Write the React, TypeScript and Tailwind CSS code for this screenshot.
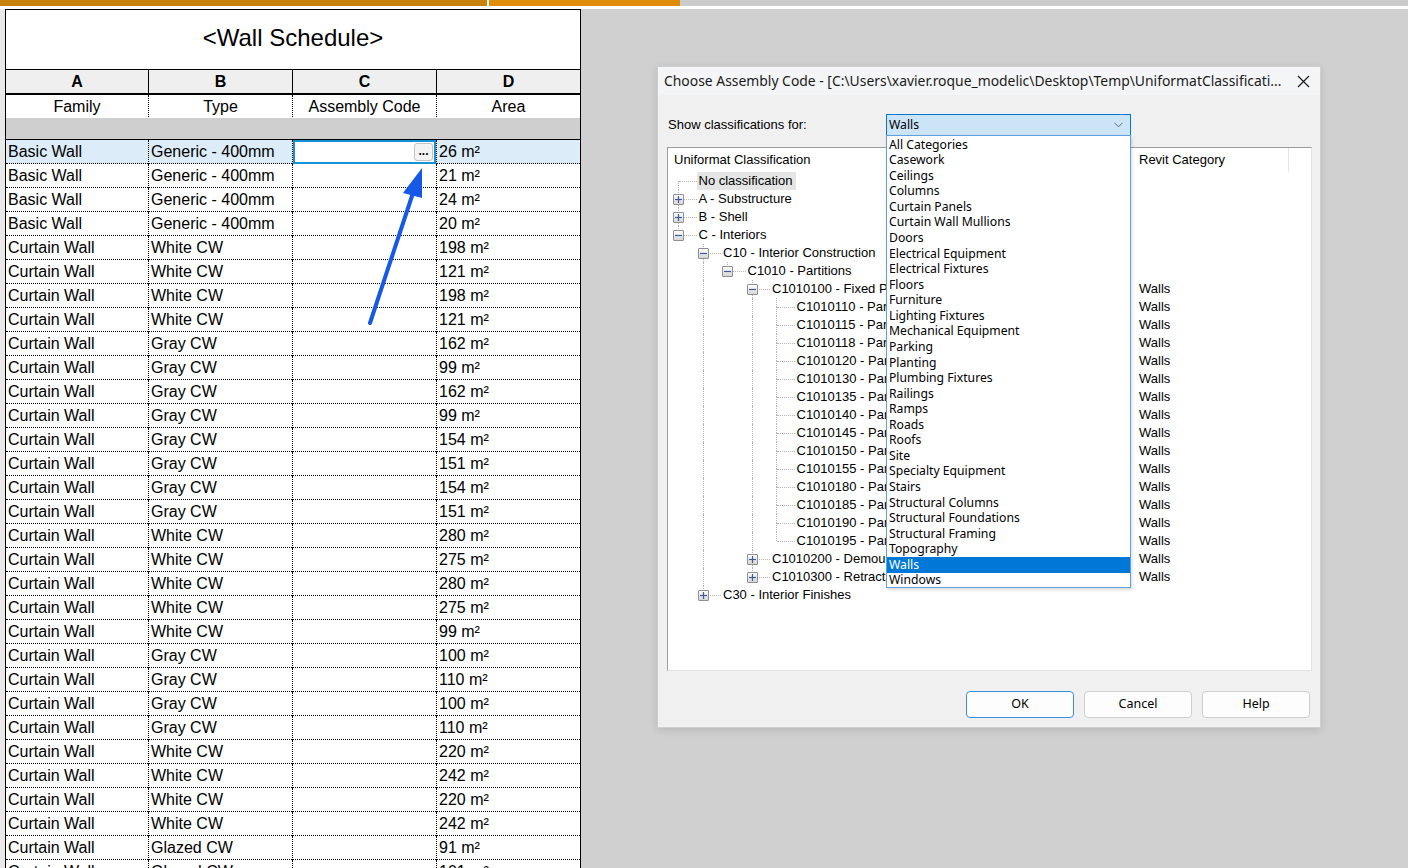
import React from "react";

type Row = [family: string, type: string, area: string];

const schedule: Row[] = [
  ["Basic Wall", "Generic - 400mm", "26"],
  ["Basic Wall", "Generic - 400mm", "21"],
  ["Basic Wall", "Generic - 400mm", "24"],
  ["Basic Wall", "Generic - 400mm", "20"],
  ["Curtain Wall", "White CW", "198"],
  ["Curtain Wall", "White CW", "121"],
  ["Curtain Wall", "White CW", "198"],
  ["Curtain Wall", "White CW", "121"],
  ["Curtain Wall", "Gray CW", "162"],
  ["Curtain Wall", "Gray CW", "99"],
  ["Curtain Wall", "Gray CW", "162"],
  ["Curtain Wall", "Gray CW", "99"],
  ["Curtain Wall", "Gray CW", "154"],
  ["Curtain Wall", "Gray CW", "151"],
  ["Curtain Wall", "Gray CW", "154"],
  ["Curtain Wall", "Gray CW", "151"],
  ["Curtain Wall", "White CW", "280"],
  ["Curtain Wall", "White CW", "275"],
  ["Curtain Wall", "White CW", "280"],
  ["Curtain Wall", "White CW", "275"],
  ["Curtain Wall", "White CW", "99"],
  ["Curtain Wall", "Gray CW", "100"],
  ["Curtain Wall", "Gray CW", "110"],
  ["Curtain Wall", "Gray CW", "100"],
  ["Curtain Wall", "Gray CW", "110"],
  ["Curtain Wall", "White CW", "220"],
  ["Curtain Wall", "White CW", "242"],
  ["Curtain Wall", "White CW", "220"],
  ["Curtain Wall", "White CW", "242"],
  ["Curtain Wall", "Glazed CW", "91"],
  ["Curtain Wall", "Glazed CW", "101"],
];

const categories = [
  "All Categories",
  "Casework",
  "Ceilings",
  "Columns",
  "Curtain Panels",
  "Curtain Wall Mullions",
  "Doors",
  "Electrical Equipment",
  "Electrical Fixtures",
  "Floors",
  "Furniture",
  "Lighting Fixtures",
  "Mechanical Equipment",
  "Parking",
  "Planting",
  "Plumbing Fixtures",
  "Railings",
  "Ramps",
  "Roads",
  "Roofs",
  "Site",
  "Specialty Equipment",
  "Stairs",
  "Structural Columns",
  "Structural Foundations",
  "Structural Framing",
  "Topography",
  "Walls",
  "Windows",
];

type TreeNode = {
  label: string;
  level: number;
  box?: "+" | "-";
  first?: boolean;
  last?: boolean;
  guides: number[];
  walls?: boolean;
  selected?: boolean;
};

const leafCodes = ["110", "115", "118", "120", "130", "135", "140", "145", "150", "155", "180", "185", "190", "195"];

const tree: TreeNode[] = [
  { label: "No classification", level: 0, first: true, guides: [], selected: true },
  { label: "A - Substructure", level: 0, box: "+", guides: [] },
  { label: "B - Shell", level: 0, box: "+", guides: [] },
  { label: "C - Interiors", level: 0, box: "-", last: true, guides: [] },
  { label: "C10 - Interior Construction", level: 1, box: "-", guides: [] },
  { label: "C1010 - Partitions", level: 2, box: "-", last: true, guides: [1] },
  { label: "C1010100 - Fixed Partitions", level: 3, box: "-", guides: [1], walls: true },
  ...leafCodes.map((code, i) => ({
    label: `C1010${code} - Partitions`,
    level: 4,
    last: i === leafCodes.length - 1,
    guides: [1, 3],
    walls: true,
  })),
  { label: "C1010200 - Demountable Partitions", level: 3, box: "+", guides: [1], walls: true },
  { label: "C1010300 - Retractable Partitions", level: 3, box: "+", last: true, guides: [1], walls: true },
  { label: "C30 - Interior Finishes", level: 1, box: "+", last: true, guides: [] },
];

function ExpandBox({ sign }: { sign: "+" | "-" }) {
  return (
    <span className="absolute left-[1px] top-[4px] flex h-[11px] w-[11px] items-center justify-center rounded-[1px] border border-[#8f8f8f] bg-linear-to-b from-white to-[#d6d6d6]">
      <svg width="7" height="7" viewBox="0 0 7 7">
        <path d="M0 3.5h7" stroke="#3d5b96" strokeWidth="1.2" />
        {sign === "+" && <path d="M3.5 0v7" stroke="#3d5b96" strokeWidth="1.2" />}
      </svg>
    </span>
  );
}

function TreeRow({ node }: { node: TreeNode }) {
  const guideCols = Array.from({ length: node.level }, (_, i) => i);
  return (
    <div className="flex h-[18px] items-stretch">
      <div className="flex w-[467px] items-stretch overflow-hidden pl-[4px]">
        {guideCols.map((lvl) => (
          <span key={lvl} className="relative w-[24.5px] shrink-0">
            {node.guides.includes(lvl) && (
              <span className="absolute bottom-0 left-[6px] top-0 border-l border-dotted border-[#b4b4b4]" />
            )}
          </span>
        ))}
        <span className="relative w-[24.5px] shrink-0">
          {!node.first && <span className="absolute left-[6px] top-0 h-[9px] border-l border-dotted border-[#b4b4b4]" />}
          {!node.last && <span className="absolute bottom-0 left-[6px] top-[9px] border-l border-dotted border-[#b4b4b4]" />}
          <span className="absolute left-[7px] right-0 top-[9px] border-t border-dotted border-[#b4b4b4]" />
          {node.box && <ExpandBox sign={node.box} />}
        </span>
        <span
          className={
            node.selected
              ? "flex items-center whitespace-nowrap bg-[#e5e5e5] px-[2px] pr-[4px]"
              : "flex items-center whitespace-nowrap px-[2px]"
          }
        >
          {node.label}
        </span>
      </div>
      <div className="flex items-center pl-[4px]">{node.walls ? "Walls" : ""}</div>
    </div>
  );
}

function Schedule() {
  return (
    <div className="flex w-[576px] flex-col border-x border-black bg-white font-['Liberation_Sans',Arial,sans-serif] text-[16px] text-black">
      <div className="flex h-[60px] items-center justify-center border-t border-black pb-[3px] text-[24px]">
        &lt;Wall Schedule&gt;
      </div>
      <div className="grid h-[26px] grid-cols-[142px_144px_144px_144px] border-y-2 border-t border-black bg-[#efefef] font-bold">
        <div className="flex items-center justify-center">A</div>
        <div className="flex items-center justify-center border-l border-black">B</div>
        <div className="flex items-center justify-center border-l border-black">C</div>
        <div className="flex items-center justify-center border-l border-black">D</div>
      </div>
      <div className="grid h-[23px] grid-cols-[142px_144px_144px_144px]">
        <div className="flex items-center justify-center">Family</div>
        <div className="flex items-center justify-center border-l border-dotted border-black">Type</div>
        <div className="flex items-center justify-center border-l border-dotted border-black">Assembly Code</div>
        <div className="flex items-center justify-center border-l border-dotted border-black">Area</div>
      </div>
      <div className="h-[22px] border-b border-black bg-[#cfcfcf]" />
      {schedule.map(([family, type, area], i) => (
        <div
          key={i}
          className={
            i === 0
              ? "grid h-[24px] shrink-0 grid-cols-[142px_144px_144px_144px] border-b border-dotted border-black bg-[#dcecf8]"
              : "grid h-[24px] shrink-0 grid-cols-[142px_144px_144px_144px] border-b border-dotted border-black"
          }
        >
          <div className="flex items-center whitespace-nowrap pl-[2px]">{family}</div>
          <div className="flex items-center whitespace-nowrap border-l border-dotted border-black pl-[2px]">{type}</div>
          <div className="border-l border-dotted border-black">
            {i === 0 && (
              <div className="relative h-full border-2 border-[#1591d8] bg-white">
                <span className="absolute right-[1px] top-[1px] flex h-[18px] w-[19px] items-end justify-center rounded-[3px] border border-[#c4c4c4] bg-[#f3f3f3] pb-[3px] text-[12px] font-bold leading-none">
                  ...
                </span>
              </div>
            )}
          </div>
          <div className="flex items-center whitespace-nowrap border-l border-dotted border-black pl-[2px]">{area} m²</div>
        </div>
      ))}
    </div>
  );
}

function AssemblyDialog() {
  return (
    <div className="relative mt-[57px] ml-[76px] flex h-[662px] w-[664px] shrink-0 flex-col border border-[#cfcfcf] bg-[#f0f0f0] text-[13px] text-black shadow-[0_2px_8px_rgba(0,0,0,0.12)]">
      <div className="flex h-[28px] items-center bg-[#f4f5f7] pl-[6px] pr-[10px] font-['Noto_Sans',sans-serif] text-[13.9px] text-[#1b1b1b]">
        <span className="flex-1 overflow-hidden whitespace-nowrap">
          Choose Assembly Code - [C:\Users\xavier.roque_modelic\Desktop\Temp\UniformatClassificati...
        </span>
        <svg width="13" height="13" viewBox="0 0 13 13" className="ml-[10px] shrink-0">
          <path d="M1 1L12 12M12 1L1 12" stroke="#1b1b1b" strokeWidth="1.2" />
        </svg>
      </div>

      <div className="flex flex-1 flex-col px-[9px] font-['Liberation_Sans',Arial,sans-serif]">
        <div className="mt-[19px] flex h-[22px] items-center">
          <span className="w-[219px] shrink-0 pl-[1px]">Show classifications for:</span>
          <div className="flex h-[22px] w-[245px] items-center justify-between border border-[#0078d7] bg-[#cce4f7] pl-[2px] pr-[7px] font-['Noto_Sans',sans-serif] text-[12.2px]">
            <span>Walls</span>
            <svg width="9" height="6" viewBox="0 0 9 6">
              <path d="M0.5 0.8L4.5 4.8L8.5 0.8" fill="none" stroke="#6d6d6d" strokeWidth="1" />
            </svg>
          </div>
        </div>

        <div className="mt-[11px] flex h-[524px] w-[645px] flex-col border border-[#9c9c9c] border-b-[#e3e3e3] border-r-[#e3e3e3] bg-white">
          <div className="flex h-[24px] shrink-0 items-center">
            <span className="w-[467px] pl-[6px]">Uniformat Classification</span>
            <span className="flex h-full w-[154px] items-center border-r border-[#e5e5e5] pl-[4px]">Revit Category</span>
          </div>
          {tree.map((node) => (
            <TreeRow key={node.label} node={node} />
          ))}
        </div>

        <div className="mt-[20px] flex h-[27px] justify-end gap-[10px] pr-[1px] font-['Noto_Sans',sans-serif] text-[12.5px]">
          <button className="w-[108px] rounded-[4px] border border-[#3c8fdc] bg-[#fdfdfd]">OK</button>
          <button className="w-[108px] rounded-[4px] border border-[#d0d0d0] bg-[#fdfdfd]">Cancel</button>
          <button className="w-[108px] rounded-[4px] border border-[#d0d0d0] bg-[#fdfdfd]">Help</button>
        </div>
      </div>

      <ul className="absolute left-[228px] top-[68px] h-[453px] w-[245px] border border-[#5fa0e3] bg-white pt-[1px] font-['Noto_Sans',sans-serif] text-[12.2px] shadow-[1px_2px_3px_rgba(0,0,0,0.15)]">
        {categories.map((c) => (
          <li
            key={c}
            className={
              c === "Walls"
                ? "flex h-[15.57px] items-center bg-[#0078d7] pl-[2px] text-white"
                : "flex h-[15.57px] items-center pl-[2px]"
            }
          >
            {c}
          </li>
        ))}
      </ul>
    </div>
  );
}

export default function App() {
  return (
    <div className="relative h-[868px] w-[1408px] overflow-hidden bg-[#d0d0d0]">
      <div className="flex h-[6px]">
        <div className="w-[487px] bg-[#c8810d]" />
        <div className="w-[2px] bg-white" />
        <div className="w-[191px] bg-[#e08c0b]" />
        <div className="flex-1 bg-[#cbcbcb]" />
      </div>
      <div className="h-[3px] bg-white" />
      <div className="flex">
        <div className="w-[5px] shrink-0 bg-[#e9e9e9]" />
        <Schedule />
        <AssemblyDialog />
      </div>

      <svg className="pointer-events-none absolute left-[360px] top-[160px]" width="70" height="170" viewBox="0 0 70 170">
        <path d="M10 163L52 36" stroke="#1659e6" strokeWidth="4" strokeLinecap="round" />
        <path d="M62 8L43 33L62 38Z" fill="#1659e6" />
      </svg>
    </div>
  );
}
